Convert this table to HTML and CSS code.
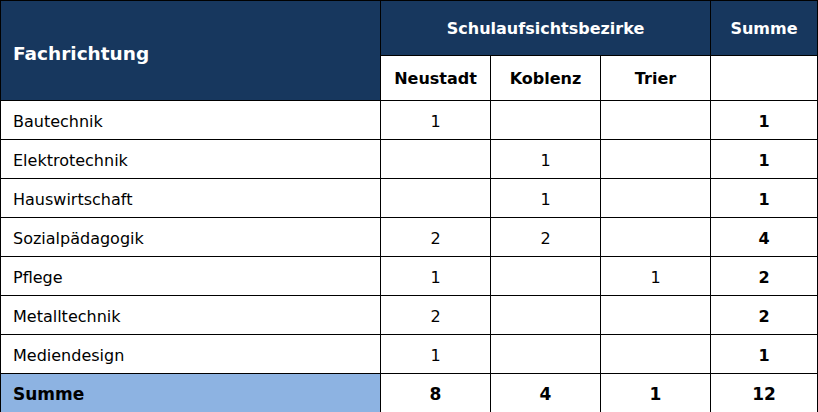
FILE: index.html
```html
<!DOCTYPE html>
<html lang="de">
<head>
<meta charset="utf-8">
<link rel="stylesheet" href="styles.css">
</head>
<body>
<table class="tbl">
  <colgroup>
    <col class="c-name"><col class="c-num"><col class="c-num"><col class="c-num"><col class="c-sum">
  </colgroup>
  <thead>
    <tr class="h1">
      <th rowspan="2" class="hd left">Fachrichtung</th>
      <th colspan="3" class="hd">Schulaufsichtsbezirke</th>
      <th class="hd">Summe</th>
    </tr>
    <tr class="h2">
      <th class="sub">Neustadt</th>
      <th class="sub">Koblenz</th>
      <th class="sub">Trier</th>
      <th class="sub"></th>
    </tr>
  </thead>
  <tbody>
    <tr><td class="name">Bautechnik</td><td>1</td><td></td><td></td><td class="b">1</td></tr>
    <tr><td class="name">Elektrotechnik</td><td></td><td>1</td><td></td><td class="b">1</td></tr>
    <tr><td class="name">Hauswirtschaft</td><td></td><td>1</td><td></td><td class="b">1</td></tr>
    <tr><td class="name">Sozialpädagogik</td><td>2</td><td>2</td><td></td><td class="b">4</td></tr>
    <tr><td class="name">Pflege</td><td>1</td><td></td><td>1</td><td class="b">2</td></tr>
    <tr><td class="name">Metalltechnik</td><td>2</td><td></td><td></td><td class="b">2</td></tr>
    <tr><td class="name">Mediendesign</td><td>1</td><td></td><td></td><td class="b">1</td></tr>
    <tr class="total"><td class="name tot">Summe</td><td>8</td><td>4</td><td>1</td><td>12</td></tr>
  </tbody>
</table>
</body>
</html>
```
FILE: styles.css
```css
html, body {
  margin: 0;
  padding: 0;
  background: #ffffff;
}
.tbl {
  border-collapse: collapse;
  table-layout: fixed;
  width: 817px;
  font-family: "DejaVu Sans", Tahoma, sans-serif;
  color: #000;
}
.c-name { width: 380px; }
.c-num { width: 110px; }
.c-sum { width: 107px; }
.tbl th, .tbl td {
  border: 1px solid #000;
  padding: 0;
  text-align: center;
  font-size: 16px;
}
.h1 { height: 55px; }
.h2 { height: 45px; }
.hd {
  background: #17375e;
  color: #fff;
  font-weight: bold;
  font-size: 18px;
}
.hd.left { text-align: left; padding-left: 12px; padding-top: 6px; font-size: 18.5px; }
.sub {
  font-weight: bold;
  font-size: 13.5px;
  padding-top: 5px;
}
.tbl tbody tr { height: 39px; }
.tbl tbody td { padding-top: 2px; }
.tbl td.name { text-align: left; padding-left: 12px; }
.b { font-weight: bold; }
.total td { font-weight: bold; font-size: 17px; }
.tot { background: #8db3e2; }
```
